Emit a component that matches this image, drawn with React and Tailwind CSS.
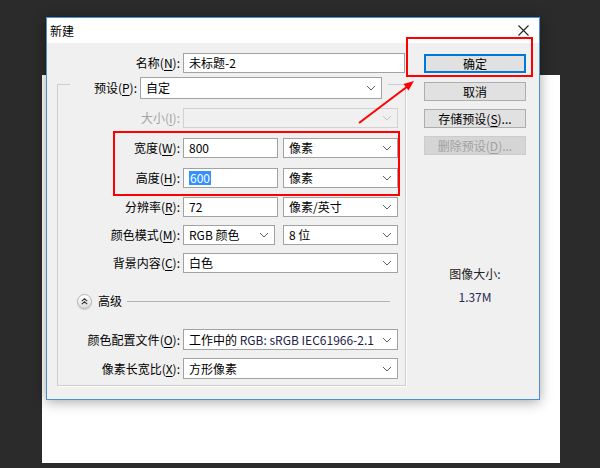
import clsx from 'clsx';

const font = { fontFamily: '"Noto Sans CJK SC", "Noto Sans", sans-serif' };

function Chevron({ disabled }) {
    return (
        <svg width="10" height="6" viewBox="0 0 10 6" className="shrink-0">
            <polyline
                points="1,1 5,5 9,1"
                fill="none"
                stroke={disabled ? '#c4c4c4' : '#606060'}
                strokeWidth="1"
            />
        </svg>
    );
}

function Select({ className, children, disabled }) {
    return (
        <div
            className={clsx(
                'flex h-[20px] items-center justify-between border pl-[5px] pr-[5px]',
                disabled ? 'border-[#d2d2d2] bg-[#f0f0f0]' : 'border-[#a2a2a2] bg-white',
                className
            )}
        >
            <span className="whitespace-nowrap leading-[16px]">{children}</span>
            <Chevron disabled={disabled} />
        </div>
    );
}

function Field({ className, children }) {
    return (
        <div className={clsx('flex h-[20px] items-center border border-[#a2a2a2] bg-white pl-[5px]', className)}>
            {children}
        </div>
    );
}

function Label({ text, k, disabled, className }) {
    return (
        <div className={clsx('shrink-0 pr-[3px] text-right', disabled ? 'text-[#a3a3a3]' : 'text-black', className)}>
            {text}(<span className="underline underline-offset-2">{k}</span>):
        </div>
    );
}

function Button({ children, primary, disabled }) {
    return (
        <div
            className={clsx(
                'flex h-[19px] w-[102px] items-center justify-center border leading-[16px]',
                primary && 'border-[#0078d7] bg-[#e1e1e1] shadow-[inset_0_0_0_1px_#0078d7]',
                !primary && !disabled && 'border-[#adadad] bg-[#e1e1e1]',
                disabled && 'border-[#cccccc] bg-[#d5d5d5] text-[#a0a0a0]'
            )}
        >
            {children}
        </div>
    );
}

export default function App() {
    return (
        <div className="relative h-[468px] w-[600px] overflow-hidden bg-[#2b2b2b] text-[12px]" style={font}>
            {/* canvas behind the dialog */}
            <div className="ml-[42px] mt-[75px] h-[388px] w-[518px] bg-white" />

            {/* dialog */}
            <div className="absolute left-[46px] top-[17px] flex h-[383px] w-[494px] flex-col border border-[#4a90d9] bg-[#f0f0f0] shadow-[0_2px_12px_rgba(0,0,0,0.35)]">
                <div className="flex h-[25px] shrink-0 items-center justify-between bg-white pl-[3px] pr-[10px]">
                    <span className="text-black">新建</span>
                    <svg width="11" height="11" viewBox="0 0 11 11">
                        <path d="M0.5 0.5 L10.5 10.5 M10.5 0.5 L0.5 10.5" stroke="#222" strokeWidth="1.1" />
                    </svg>
                </div>

                <div className="flex pl-[10px]">
                    {/* left column */}
                    <div className="w-[349px] pt-[10px]">
                        <div className="flex h-[20px] items-center">
                            <Label text="名称" k="N" className="w-[126px]" />
                            <Field className="w-[222px]">未标题-2</Field>
                        </div>

                        <div className="mt-[11px] h-[302px] border border-[#cdcdcd] shadow-[1px_1px_0_#ffffff]">
                            {/* preset row sits on the group box top line */}
                            <div className="-mt-[8px] ml-[12px] mr-[17px] flex h-[22px] items-center bg-[#f0f0f0]">
                                <Label text="预设" k="P" className="flex-1" />
                                <div className="mr-[6px] flex h-[22px] w-[242px] items-center justify-between border border-[#a2a2a2] bg-white pl-[5px] pr-[5px]">
                                    <span className="leading-[16px]">自定</span>
                                    <Chevron />
                                </div>
                            </div>

                            <div className="mt-[9px] flex items-center">
                                <Label text="大小" k="I" disabled className="w-[125px]" />
                                <Select disabled className="w-[215px]" />
                            </div>

                            <div className="mt-[10px] flex items-center">
                                <Label text="宽度" k="W" className="w-[125px]" />
                                <Field className="w-[95px]">800</Field>
                                <Select className="ml-[5px] w-[115px]">像素</Select>
                            </div>

                            <div className="mt-[10px] flex items-center">
                                <Label text="高度" k="H" className="w-[125px]" />
                                <Field className="w-[95px]">
                                    <span className="bg-[#3390ff] px-[1px] leading-[14px] text-white">600</span>
                                </Field>
                                <Select className="ml-[5px] w-[115px]">像素</Select>
                            </div>

                            <div className="mt-[9px] flex items-center">
                                <Label text="分辨率" k="R" className="w-[125px]" />
                                <Field className="w-[95px]">72</Field>
                                <Select className="ml-[5px] w-[115px]">像素/英寸</Select>
                            </div>

                            <div className="mt-[8px] flex items-center">
                                <Label text="颜色模式" k="M" className="w-[125px]" />
                                <Select className="w-[92px]">RGB 颜色</Select>
                                <Select className="ml-[8px] w-[115px]">8 位</Select>
                            </div>

                            <div className="mt-[8px] flex items-center">
                                <Label text="背景内容" k="C" className="w-[125px]" />
                                <Select className="w-[215px]">白色</Select>
                            </div>

                            <div className="mt-[20px] flex h-[16px] items-center pl-[19px]">
                                <div className="flex h-[15px] w-[15px] items-center justify-center rounded-full border border-[#b5b5b5] bg-gradient-to-b from-white to-[#dedede] shadow-[0_1px_1px_rgba(0,0,0,0.15)]">
                                    <svg width="7" height="7" viewBox="0 0 7 7">
                                        <polyline points="0.8,3.2 3.5,0.8 6.2,3.2" fill="none" stroke="#333" strokeWidth="1.1" />
                                        <polyline points="0.8,6.2 3.5,3.8 6.2,6.2" fill="none" stroke="#333" strokeWidth="1.1" />
                                    </svg>
                                </div>
                                <span className="ml-[6px]">高级</span>
                                <div className="ml-[5px] mr-[15px] h-px flex-1 bg-[#b4b4b4]" />
                            </div>

                            <div className="mt-[20px] flex items-center">
                                <Label text="颜色配置文件" k="O" className="w-[125px]" />
                                <Select className="h-[21px] w-[215px]">
                                    工作中的 <span className="text-[#1c1c48]">RGB: sRGB IEC61966-2.1</span>
                                </Select>
                            </div>

                            <div className="mt-[8px] flex items-center">
                                <Label text="像素长宽比" k="X" className="w-[125px]" />
                                <Select className="h-[21px] w-[215px]">方形像素</Select>
                            </div>
                        </div>
                    </div>

                    {/* right column */}
                    <div className="flex flex-1 flex-col pl-[18px] pt-[11px]">
                        <Button primary>确定</Button>
                        <div className="mt-[9px]">
                            <Button>取消</Button>
                        </div>
                        <div className="mt-[8px]">
                            <Button>
                                存储预设(<span className="underline underline-offset-2">S</span>)...
                            </Button>
                        </div>
                        <div className="mt-[8px]">
                            <Button disabled>
                                删除预设(<span className="underline underline-offset-2">D</span>)...
                            </Button>
                        </div>
                        <div className="mt-[110px] w-[102px] text-center text-[#222]">图像大小:</div>
                        <div className="mt-[5px] w-[102px] text-center text-[#2a2a50]">1.37M</div>
                    </div>
                </div>
            </div>

            {/* red annotations */}
            <div className="pointer-events-none absolute left-[406px] top-[37px] h-[40px] w-[127px] border-2 border-[#ff0000]" />
            <div className="pointer-events-none absolute left-[113px] top-[131px] h-[65px] w-[287px] border-2 border-[#ff0000]" />
            <svg className="pointer-events-none absolute left-0 top-0" width="600" height="468" viewBox="0 0 600 468">
                <line x1="359" y1="123" x2="408" y2="86" stroke="#ff0000" strokeWidth="2" />
                <polygon points="414,81 403.5,84 408.5,90.5" fill="#ff0000" />
            </svg>
        </div>
    );
}
